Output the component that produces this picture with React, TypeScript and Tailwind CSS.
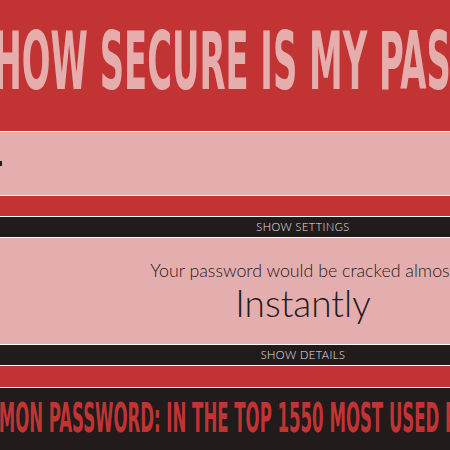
const condensed = '"DejaVu Sans Condensed", "Liberation Sans", sans-serif';

function ToggleBar({ label }: { label: string }) {
  return (
    <div className="flex h-[21px] items-center justify-center border-b border-white bg-[#221b1b]">
      <span className="font-['Lato',sans-serif] text-[11px] font-light tracking-[0.5px] text-[#ece6e6] uppercase">{label}</span>
    </div>
  );
}

export default function App() {
  return (
    <div className="h-[450px] w-full overflow-hidden bg-[#221b1b]">
      <div className="w-[606px]">
        {/* page title */}
        <header className="flex h-[132px] items-center justify-center border-b border-white bg-[#c23434] pb-[8px]">
          <h1
            className="inline-block scale-x-[0.47] whitespace-nowrap text-[80px] leading-none font-bold text-[#e6adad]"
            style={{ fontFamily: condensed }}
          >
            HOW SECURE IS MY PASSWORD?
          </h1>
        </header>

        {/* password input */}
        <div className="flex h-[64px] items-center border-b border-white bg-[#e5aeae]">
          <div className="h-[5px] w-[2px] bg-[#221b1b]" />
        </div>

        <div className="h-[21px] border-b border-white bg-[#c23434]" />
        <ToggleBar label="Show settings" />

        {/* result */}
        <div className="flex h-[107px] flex-col items-center border-b border-white bg-[#e5aeae] pt-[21px] font-['Lato',sans-serif] text-[#221b1b]">
          <p className="whitespace-nowrap text-[17.8px] leading-[22px] font-light">Your password would be cracked almost</p>
          <p className="text-[37px] leading-[44px] font-light">Instantly</p>
        </div>

        <ToggleBar label="Show details" />
        <div className="h-[22px] border-b border-white bg-[#c23434]" />

        {/* warning */}
        <div className="flex h-[61px] items-center pb-[2px]">
          <p
            className="ml-[-44px] inline-block origin-left scale-x-[0.46] whitespace-nowrap text-[40px] leading-none font-bold text-[#c23434]"
            style={{ fontFamily: condensed }}
          >
            COMMON PASSWORD: IN THE TOP 1550 MOST USED PASSWORDS
          </p>
        </div>
      </div>
    </div>
  );
}
